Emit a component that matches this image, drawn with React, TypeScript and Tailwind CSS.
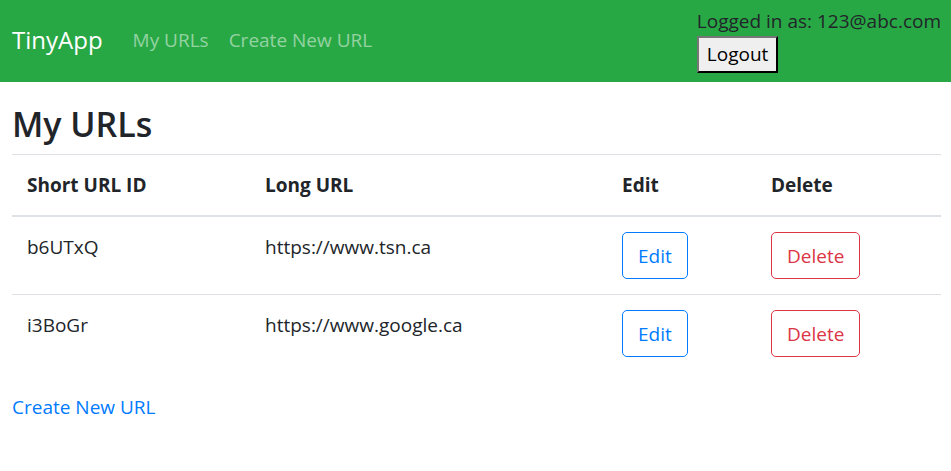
const urls = [
  { id: "b6UTxQ", longURL: "https://www.tsn.ca" },
  { id: "i3BoGr", longURL: "https://www.google.ca" },
];

const Navbar = () => (
  <nav className="h-[82px] bg-[#28a745] flex items-start justify-between pl-[12px] pr-[10px]">
    <div className="flex items-center h-full pb-[3px]">
      <a className="text-[24px] text-white mr-[20px]">TinyApp</a>
      <a className="px-[10px] text-[19px] text-white/50">My URLs</a>
      <a className="px-[10px] text-[19px] text-white/50">Create New URL</a>
    </div>
    <div className="flex flex-col items-start pt-[7px]">
      <span className="text-[19px] leading-[29px] text-[#212529]">Logged in as: 123@abc.com</span>
      <button className="h-[37px] px-[8px] text-[19px] leading-none text-black bg-[#efefef] border-2 border-t-[#767676] border-l-[#767676] border-b-[#000] border-r-[#000]">
        Logout
      </button>
    </div>
  </nav>
);

export default function App() {
  return (
    <div className="min-h-screen bg-white text-[#212529] text-[19px] leading-[30px] font-['Open_Sans',sans-serif]">
      <Navbar />
      <main className="pl-[12px] pr-[10px] pt-[18px]">
        <h2 className="text-[34px] leading-[48px] font-semibold mb-[6px]">My URLs</h2>
        <div className="border-t border-[#dee2e6]">
          <div className="grid grid-cols-[238px_357px_149px_1fr] border-b-2 border-[#dee2e6] font-bold">
            <div className="p-[15px]">Short URL ID</div>
            <div className="p-[15px]">Long URL</div>
            <div className="p-[15px]">Edit</div>
            <div className="p-[15px]">Delete</div>
          </div>
          {urls.map((u, i) => (
            <div
              key={u.id}
              className={`grid grid-cols-[238px_357px_149px_1fr] ${i > 0 ? "border-t border-[#dee2e6]" : ""}`}
            >
              <div className="p-[15px]">{u.id}</div>
              <div className="p-[15px]">{u.longURL}</div>
              <div className="p-[15px]">
                <button className="h-[47px] px-[15px] border border-[#007bff] rounded-[5px] text-[#007bff]">Edit</button>
              </div>
              <div className="p-[15px]">
                <button className="h-[47px] px-[15px] border border-[#dc3545] rounded-[5px] text-[#dc3545]">Delete</button>
              </div>
            </div>
          ))}
        </div>
        <a className="block mt-[20px] text-[#007bff]">Create New URL</a>
      </main>
    </div>
  );
}
